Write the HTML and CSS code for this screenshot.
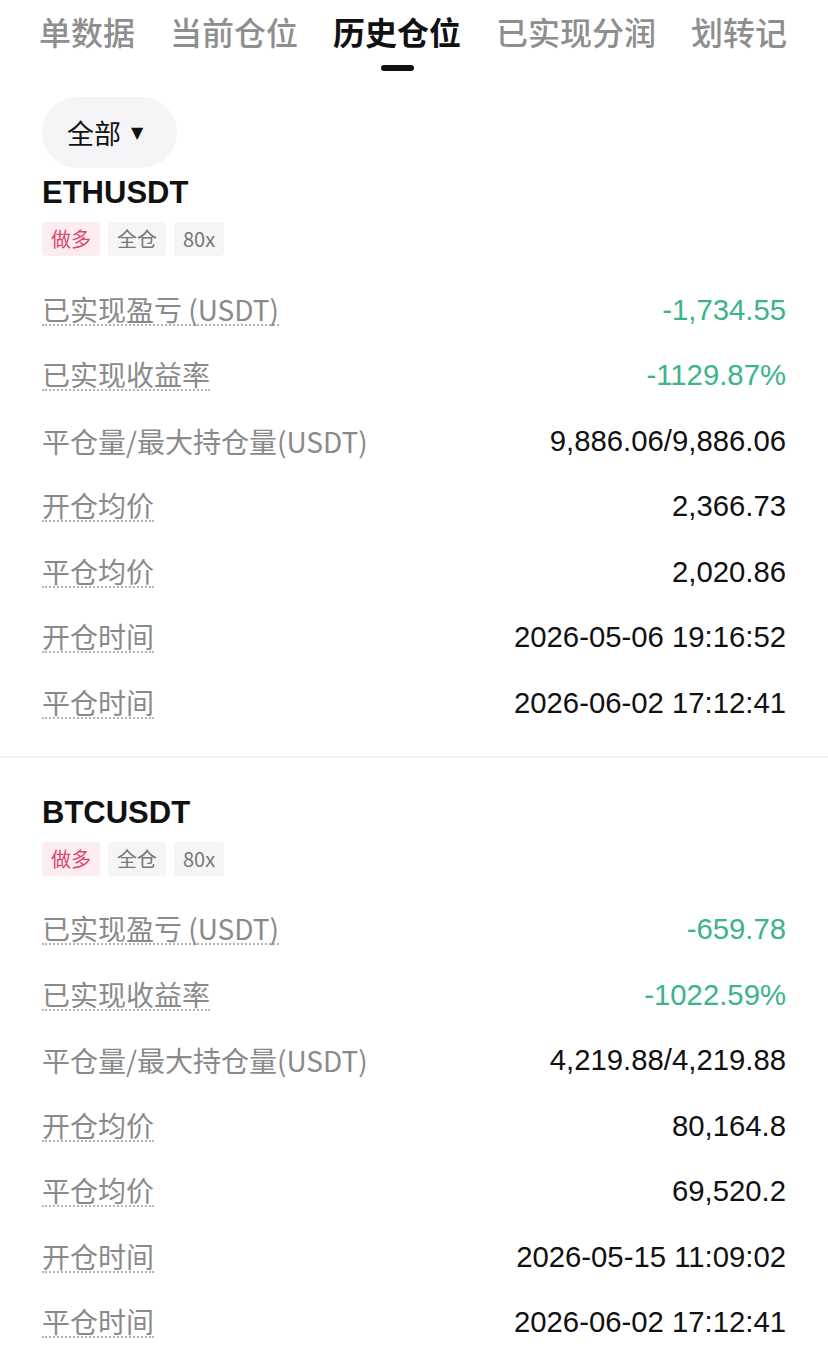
FILE: index.html
```html
<!DOCTYPE html>
<html lang="zh-CN">
<head>
    <meta charset="UTF-8">
    <meta name="viewport" content="width=device-width, initial-scale=1.0">
    <title>历史仓位</title>
    <link rel="stylesheet" href="styles.css">
</head>
<body>
    <div class="tabs">
        <div class="tab-track">
            <div class="tab">订单数据</div>
            <div class="tab">当前仓位</div>
            <div class="tab active">历史仓位<span class="tab-line"></span></div>
            <div class="tab">已实现分润</div>
            <div class="tab">划转记录</div>
        </div>
    </div>

    <div class="filter">
        <button class="filter-pill">全部 <span class="caret">▼</span></button>
    </div>

    <div class="position">
        <div class="symbol">ETHUSDT</div>
        <div class="tags">
            <span class="tag long">做多</span>
            <span class="tag">全仓</span>
            <span class="tag">80x</span>
        </div>
        <div class="rows">
            <div class="row"><span class="label dotted">已实现盈亏 (USDT)</span><span class="value down">-1,734.55</span></div>
            <div class="row"><span class="label dotted">已实现收益率</span><span class="value down">-1129.87%</span></div>
            <div class="row"><span class="label">平仓量/最大持仓量(USDT)</span><span class="value">9,886.06/9,886.06</span></div>
            <div class="row"><span class="label dotted">开仓均价</span><span class="value">2,366.73</span></div>
            <div class="row"><span class="label dotted">平仓均价</span><span class="value">2,020.86</span></div>
            <div class="row"><span class="label dotted">开仓时间</span><span class="value">2026-05-06 19:16:52</span></div>
            <div class="row"><span class="label dotted">平仓时间</span><span class="value">2026-06-02 17:12:41</span></div>
        </div>
    </div>

    <div class="position">
        <div class="symbol">BTCUSDT</div>
        <div class="tags">
            <span class="tag long">做多</span>
            <span class="tag">全仓</span>
            <span class="tag">80x</span>
        </div>
        <div class="rows">
            <div class="row"><span class="label dotted">已实现盈亏 (USDT)</span><span class="value down">-659.78</span></div>
            <div class="row"><span class="label dotted">已实现收益率</span><span class="value down">-1022.59%</span></div>
            <div class="row"><span class="label">平仓量/最大持仓量(USDT)</span><span class="value">4,219.88/4,219.88</span></div>
            <div class="row"><span class="label dotted">开仓均价</span><span class="value">80,164.8</span></div>
            <div class="row"><span class="label dotted">平仓均价</span><span class="value">69,520.2</span></div>
            <div class="row"><span class="label dotted">开仓时间</span><span class="value">2026-05-15 11:09:02</span></div>
            <div class="row"><span class="label dotted">平仓时间</span><span class="value">2026-06-02 17:12:41</span></div>
        </div>
    </div>
</body>
</html>
```

FILE: styles.css
```css
body {
    font-family: "Liberation Sans", "Noto Sans CJK SC", sans-serif;
    background-color: #fff;
    color: #111;
    margin: 0;
    padding: 0;
}
.tabs {
    margin: 0 40px 0 40px;
    padding-top: 11px;
    overflow: hidden;
}
.tab-track {
    display: flex;
    gap: 35px;
    margin-left: -33px;
    white-space: nowrap;
}
.tab {
    display: flex;
    flex-direction: column;
    align-items: center;
    font-family: "Noto Sans CJK SC", sans-serif;
    font-size: 32px;
    font-weight: 500;
    line-height: 40px;
    height: 60px;
    color: #8e8e8e;
    flex-shrink: 0;
}
.tab.active {
    color: #111;
    font-weight: 700;
}
.tab-line {
    display: block;
    width: 33px;
    height: 6px;
    margin-top: 14px;
    border-radius: 3px;
    background-color: #111;
}
.filter {
    padding: 26px 42px 0;
}
.filter-pill {
    display: flex;
    align-items: center;
    gap: 10px;
    height: 71px;
    padding: 0 34px 0 25px;
    border: none;
    border-radius: 36px;
    background-color: #f5f5f7;
    font-family: "Noto Sans CJK SC", sans-serif;
    font-size: 27px;
    color: #111;
}
.caret {
    font-family: "DejaVu Sans", sans-serif;
    font-size: 16px;
}
.position {
    padding: 7px 42px 20px;
}
.position + .position {
    border-top: 2px solid #f2f2f2;
    padding-top: 37px;
}
.symbol {
    font-size: 31px;
    font-weight: bold;
    line-height: 36px;
}
.tags {
    display: flex;
    gap: 8px;
    margin-top: 11px;
}
.tag {
    padding: 0 9px;
    height: 34px;
    line-height: 34px;
    border-radius: 4px;
    background-color: #f5f5f5;
    font-family: "Noto Sans CJK SC", sans-serif;
    font-size: 20px;
    color: #777;
}
.tag.long {
    background-color: #fdecf0;
    color: #d9486e;
}
.rows {
    margin-top: 21px;
}
.row {
    display: flex;
    justify-content: space-between;
    align-items: center;
    height: 65.5px;
}
.label {
    font-family: "Noto Sans CJK SC", sans-serif;
    font-size: 28px;
    line-height: 30px;
    color: #8a8a8a;
}
.label.dotted {
    border-bottom: 2px dotted #b4b4b4;
}
.value {
    font-size: 29.3px;
    color: #111;
}
.value.down {
    color: #3cb48a;
}
```
